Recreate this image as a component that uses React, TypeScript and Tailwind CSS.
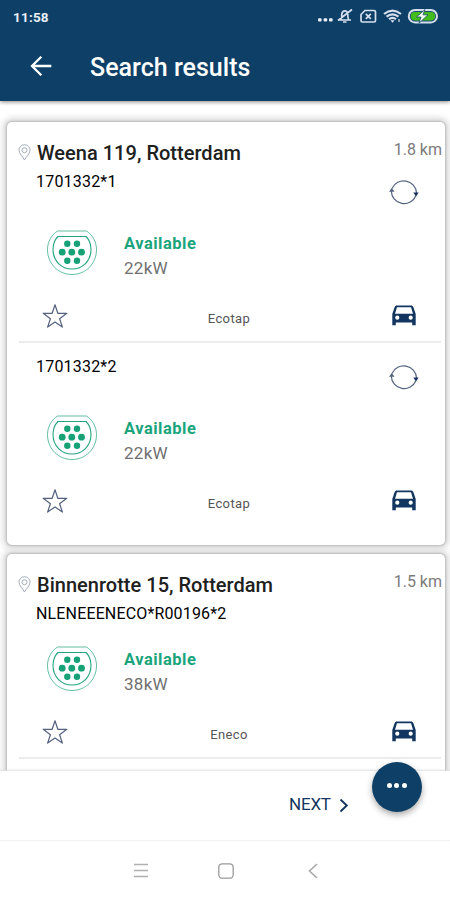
import React from "react";

type Connector = { id: string; power: string; provider: string; idClass: string; refreshable: boolean };
type Station = { address: string; distance: string; connectors: Connector[] };

const stations: Station[] = [
  {
    address: "Weena 119, Rotterdam",
    distance: "1.8 km",
    connectors: [
      { id: "1701332*1", power: "22kW", provider: "Ecotap", idClass: "tracking-[0.2px]", refreshable: true },
      { id: "1701332*2", power: "22kW", provider: "Ecotap", idClass: "tracking-[0.2px]", refreshable: true },
    ],
  },
  {
    address: "Binnenrotte 15, Rotterdam",
    distance: "1.5 km",
    connectors: [
      { id: "NLENEEENECO*R00196*2", power: "38kW", provider: "Eneco", idClass: "tracking-[0.15px]", refreshable: false },
    ],
  },
];

function StatusIcons() {
  return (
    <svg width="124" height="20" viewBox="0 0 124 20" fill="none" stroke="#d5dfee">
      <g fill="#e8eef6" stroke="none">
        <rect x="1" y="12.2" width="3.6" height="3.2" rx="1" />
        <rect x="6.600" y="12.2" width="3.6" height="3.2" rx="1" />
        <rect x="12" y="12.2" width="3.6" height="3.2" rx="1" />
      </g>
      <path d="M21.500 14H34M24 13.500c1-1.500.6-3.300.8-5.300.3-2.200 1.300-3.400 3-3.400s2.700 1.200 3 3.400c.2 2-.2 3.800.8 5.300M21 14.500L35 3.500" strokeWidth="1.700" />
      <path d="M26 16h3.500" strokeWidth="1.500" />
      <path d="M48 4.500h9q1.500 0 1.500 1.500v8.500q0 1.500-1.500 1.500H45.500q-1.500 0-1.500-1.500V8.500z" strokeWidth="1.700" />
      <path d="M48.800 7.800l5 5M53.800 7.800l-5 5" strokeWidth="1.700" />
      <path d="M67 8Q75.500 1.400 84 8M69.500 10.700q6-4.600 12 0M72 13.200q3.500-2.800 7 0" strokeWidth="2.200" />
      <path d="M73.500 14.200h4l-2 2.500z" fill="#e8eef6" stroke="none" />
      <path d="M82 13v3" strokeWidth="1.200" />
      <rect x="91.800" y="4" width="28.200" height="12.400" rx="6.200" fill="#174a6c" strokeWidth="2" />
      <rect x="93.800" y="6" width="24.200" height="8.400" rx="3.800" fill="#43bd1c" stroke="none" />
      <path d="M108 3.500l-8.500 7.500h4.500l-2 6.200 9-8.400h-5z" fill="#f4fff2" stroke="#174a6c" strokeWidth=".8" />
    </svg>
  );
}

function PinIcon() {
  return (
    <svg width="13" height="17" viewBox="0 0 13 17" fill="none" stroke="#9aa3b2" strokeWidth=".9">
      <path d="M6.500 16C5 12.800 1 9.800 1 6.200a5.500 5.500 0 0 1 11 0c0 3.600-4 6.600-5.500 9.800z" />
      <circle cx="6.500" cy="6.200" r="2.500" />
    </svg>
  );
}

function RefreshIcon() {
  return (
    <svg width="30" height="30" viewBox="0 0 30 30" fill="none" stroke="#53637f" strokeWidth="1.200">
      <path d="M3 11.500A12.800 12.800 0 0 1 27.500 16M27 18.500A12.800 12.800 0 0 1 2.300 14" />
      <path d="M24.300 15.500h5.400l-2.700 4z" fill="#17315f" stroke="none" />
      <path d="M0 14.800L2.700 11 5.600 14.800z" fill="#53637f" stroke="none" />
    </svg>
  );
}

function PlugIcon() {
  return (
    <svg width="52" height="46" viewBox="0 0 52 46" fill="none" stroke="#22a47c">
      <path d="M11.500 1h29c5.500 3.500 10 10.500 10 18.500C50.500 34 39.500 44.500 26 44.500S1.500 34 1.500 19.500c0-8 4.500-15 10-18.500z" strokeWidth=".9" opacity=".8" />
      <path d="M12 6.500h28c3 3 5 7.500 5 13 0 11.500-8.500 19.500-19 19.500S7 31 7 19.500c0-5.500 2-10 5-13z" strokeWidth="1.100" />
      <g fill="#16a276" stroke="none">
        <circle cx="21.300" cy="13.800" r="3.200" />
        <circle cx="31" cy="13.800" r="3.200" />
        <circle cx="16.200" cy="22.200" r="3.400" />
        <circle cx="25.800" cy="22.200" r="3.400" />
        <circle cx="35.500" cy="22.200" r="3.400" />
        <circle cx="21.300" cy="30.700" r="3.200" />
        <circle cx="31" cy="30.700" r="3.200" />
      </g>
    </svg>
  );
}

function StarIcon() {
  return (
    <svg width="26" height="25" viewBox="0 0 26 25" fill="none" stroke="#53617f" strokeWidth="1.200" strokeLinejoin="round">
      <path d="M13 .8l2.800 8.500h9l-7.200 5.400 2.800 8.400L13 17.900l-7.400 5.200 2.800-8.400L1.200 9.300h9z" />
    </svg>
  );
}

function CarIcon() {
  return (
    <svg width="24" height="21" viewBox="0 0 24 21">
      <path
        fillRule="evenodd"
        fill="#123660"
        d="M5 .5h14c1.300 0 2 .6 2.400 1.800L23.700 9v11.200h-3.500v-2.700H3.800v2.700H.3V9l2.300-6.700C3 1.100 3.700.5 5 .5zM5 2.200L3 8.700h18L19 2.200zM5.300 10.600a2.100 2.100 0 1 0 0 4.200 2.100 2.100 0 0 0 0-4.200zm13.400 0a2.100 2.100 0 1 0 0 4.200 2.100 2.100 0 0 0 0-4.200z"
      />
    </svg>
  );
}

function ConnectorBlock({ connector }: { connector: Connector }) {
  return (
    <section className="shrink-0">
      <div className={`flex items-start justify-between pl-[29px] pr-[26px] ${connector.refreshable ? "h-12" : "h-8"}`}>
        <span className={`mt-px text-[16px] leading-6 text-black ${connector.idClass}`}>{connector.id}</span>
        {connector.refreshable && <span className="mt-2"><RefreshIcon /></span>}
      </div>
      <div className="flex h-[70px] items-center pl-[39px]">
        <span className="mt-[2px]"><PlugIcon /></span>
        <div className="ml-[26px] mt-[8px] leading-[25px]">
          <p className="text-[16.5px] font-bold tracking-[0.5px] text-[#1ba47b]">Available</p>
          <p className="text-[17px] tracking-[0.3px] text-[#707070]">{connector.power}</p>
        </div>
      </div>
      <div className="grid h-[55px] grid-cols-3 items-start pl-[35px] pr-[29px] pt-[17px]">
        <StarIcon />
        <span className="pt-[5px] text-center text-[13px] leading-5 tracking-[0.4px] text-[#555]">{connector.provider}</span>
        <span className="mt-px justify-self-end"><CarIcon /></span>
      </div>
    </section>
  );
}

function StationCard({ station }: { station: Station }) {
  return (
    <article className="flex h-[423px] shrink-0 flex-col rounded-[5px] bg-white shadow-[0_0_2px_1px_#bcbcbc,0_0_6px_4px_#dadada]">
      <header className="flex h-[47px] shrink-0 items-start pl-[11px] pr-[3px]">
        <span className="mt-[22px]"><PinIcon /></span>
        <h2 className="ml-[6px] mt-[18px] grow whitespace-nowrap text-[20px] font-medium leading-[26px] tracking-[0.02px] text-[#202020]">{station.address}</h2>
        <span className="mt-[16px] whitespace-nowrap text-[16px] leading-6 text-[#7b7b7b]">{station.distance}</span>
      </header>
      {station.connectors.map((connector, i) => (
        <React.Fragment key={connector.id}>
          <ConnectorBlock connector={connector} />
          {i === 0 && <hr className="-mt-px mb-[11px] ml-3 mr-1 h-[2px] shrink-0 border-0 bg-[#ececec]" />}
        </React.Fragment>
      ))}
    </article>
  );
}

export default function App() {
  return (
    <div className="flex h-[900px] w-[450px] flex-col overflow-hidden bg-white font-['Roboto',sans-serif]">
      <header className="z-10 h-[101px] shrink-0 bg-[#0e4067] text-white shadow-[0_1px_4px_#888]">
        <div className="flex h-8 items-center justify-between pl-[13px] pr-[9px]">
          <span className="mt-[2px] text-[13.5px] font-bold tracking-[0.2px] text-[#e8eef6]">11:58</span>
          <StatusIcons />
        </div>
        <div className="flex h-[69px] items-center pl-[29px]">
          <svg width="23" height="22" viewBox="0 0 23 22" fill="none" stroke="white" strokeWidth="2.300" className="mb-[2px]">
            <path d="M22.300 11H3M12.300 1.700L3 11l9.300 9.300" />
          </svg>
          <h1 className="ml-[38px] mt-[2px] text-[25px] font-medium leading-[30px] tracking-[0.02px]">Search results</h1>
        </div>
      </header>
      <main className="flex h-[670px] shrink-0 flex-col gap-[9px] overflow-hidden pl-[7px] pr-[5px] pt-[21px]">
        {stations.map((station) => (
          <StationCard key={station.address} station={station} />
        ))}
      </main>
      <footer className="relative flex h-[70px] shrink-0 items-center border-b border-[#f1f1f1] bg-white pl-[289px] shadow-[0_-1px_2px_#ddd]">
        <button className="mt-[-1px] flex items-center text-[17px] tracking-[-0.2px] text-[#14365f]">
          NEXT
          <svg width="10" height="15" viewBox="0 0 10 15" fill="none" stroke="#14365f" strokeWidth="1.900" className="ml-[8px]">
            <path d="M1.500 1.500l6.300 6-6.300 6" />
          </svg>
        </button>
        <button className="absolute left-[372px] top-[-9px] flex size-[50px] items-center justify-center gap-[2.500px] rounded-full bg-[#0e4067] pb-[3px] pr-[1px] shadow-[0_3px_6px_#aaa]">
          <i className="size-[5px] rounded-full bg-white" />
          <i className="size-[5px] rounded-full bg-white" />
          <i className="size-[5px] rounded-full bg-white" />
        </button>
      </footer>
      <nav className="flex h-[59px] items-center bg-white pl-[134px]">
        <svg width="14" height="16" viewBox="0 0 14 16" stroke="#b0b0b0" strokeWidth="1.500"><path d="M0 1.500h14M0 7.500h14M0 13.500h14" /></svg>
        <svg width="16" height="16" viewBox="0 0 16 16" fill="none" stroke="#999" strokeWidth="1.300" className="ml-[70px]"><rect x=".8" y=".8" width="14.400" height="14.400" rx="3.500" /></svg>
        <svg width="10" height="16" viewBox="0 0 10 16" fill="none" stroke="#a5a5a5" strokeWidth="1.500" className="ml-[74px]"><path d="M9 1L1.500 8 9 15" /></svg>
      </nav>
    </div>
  );
}
